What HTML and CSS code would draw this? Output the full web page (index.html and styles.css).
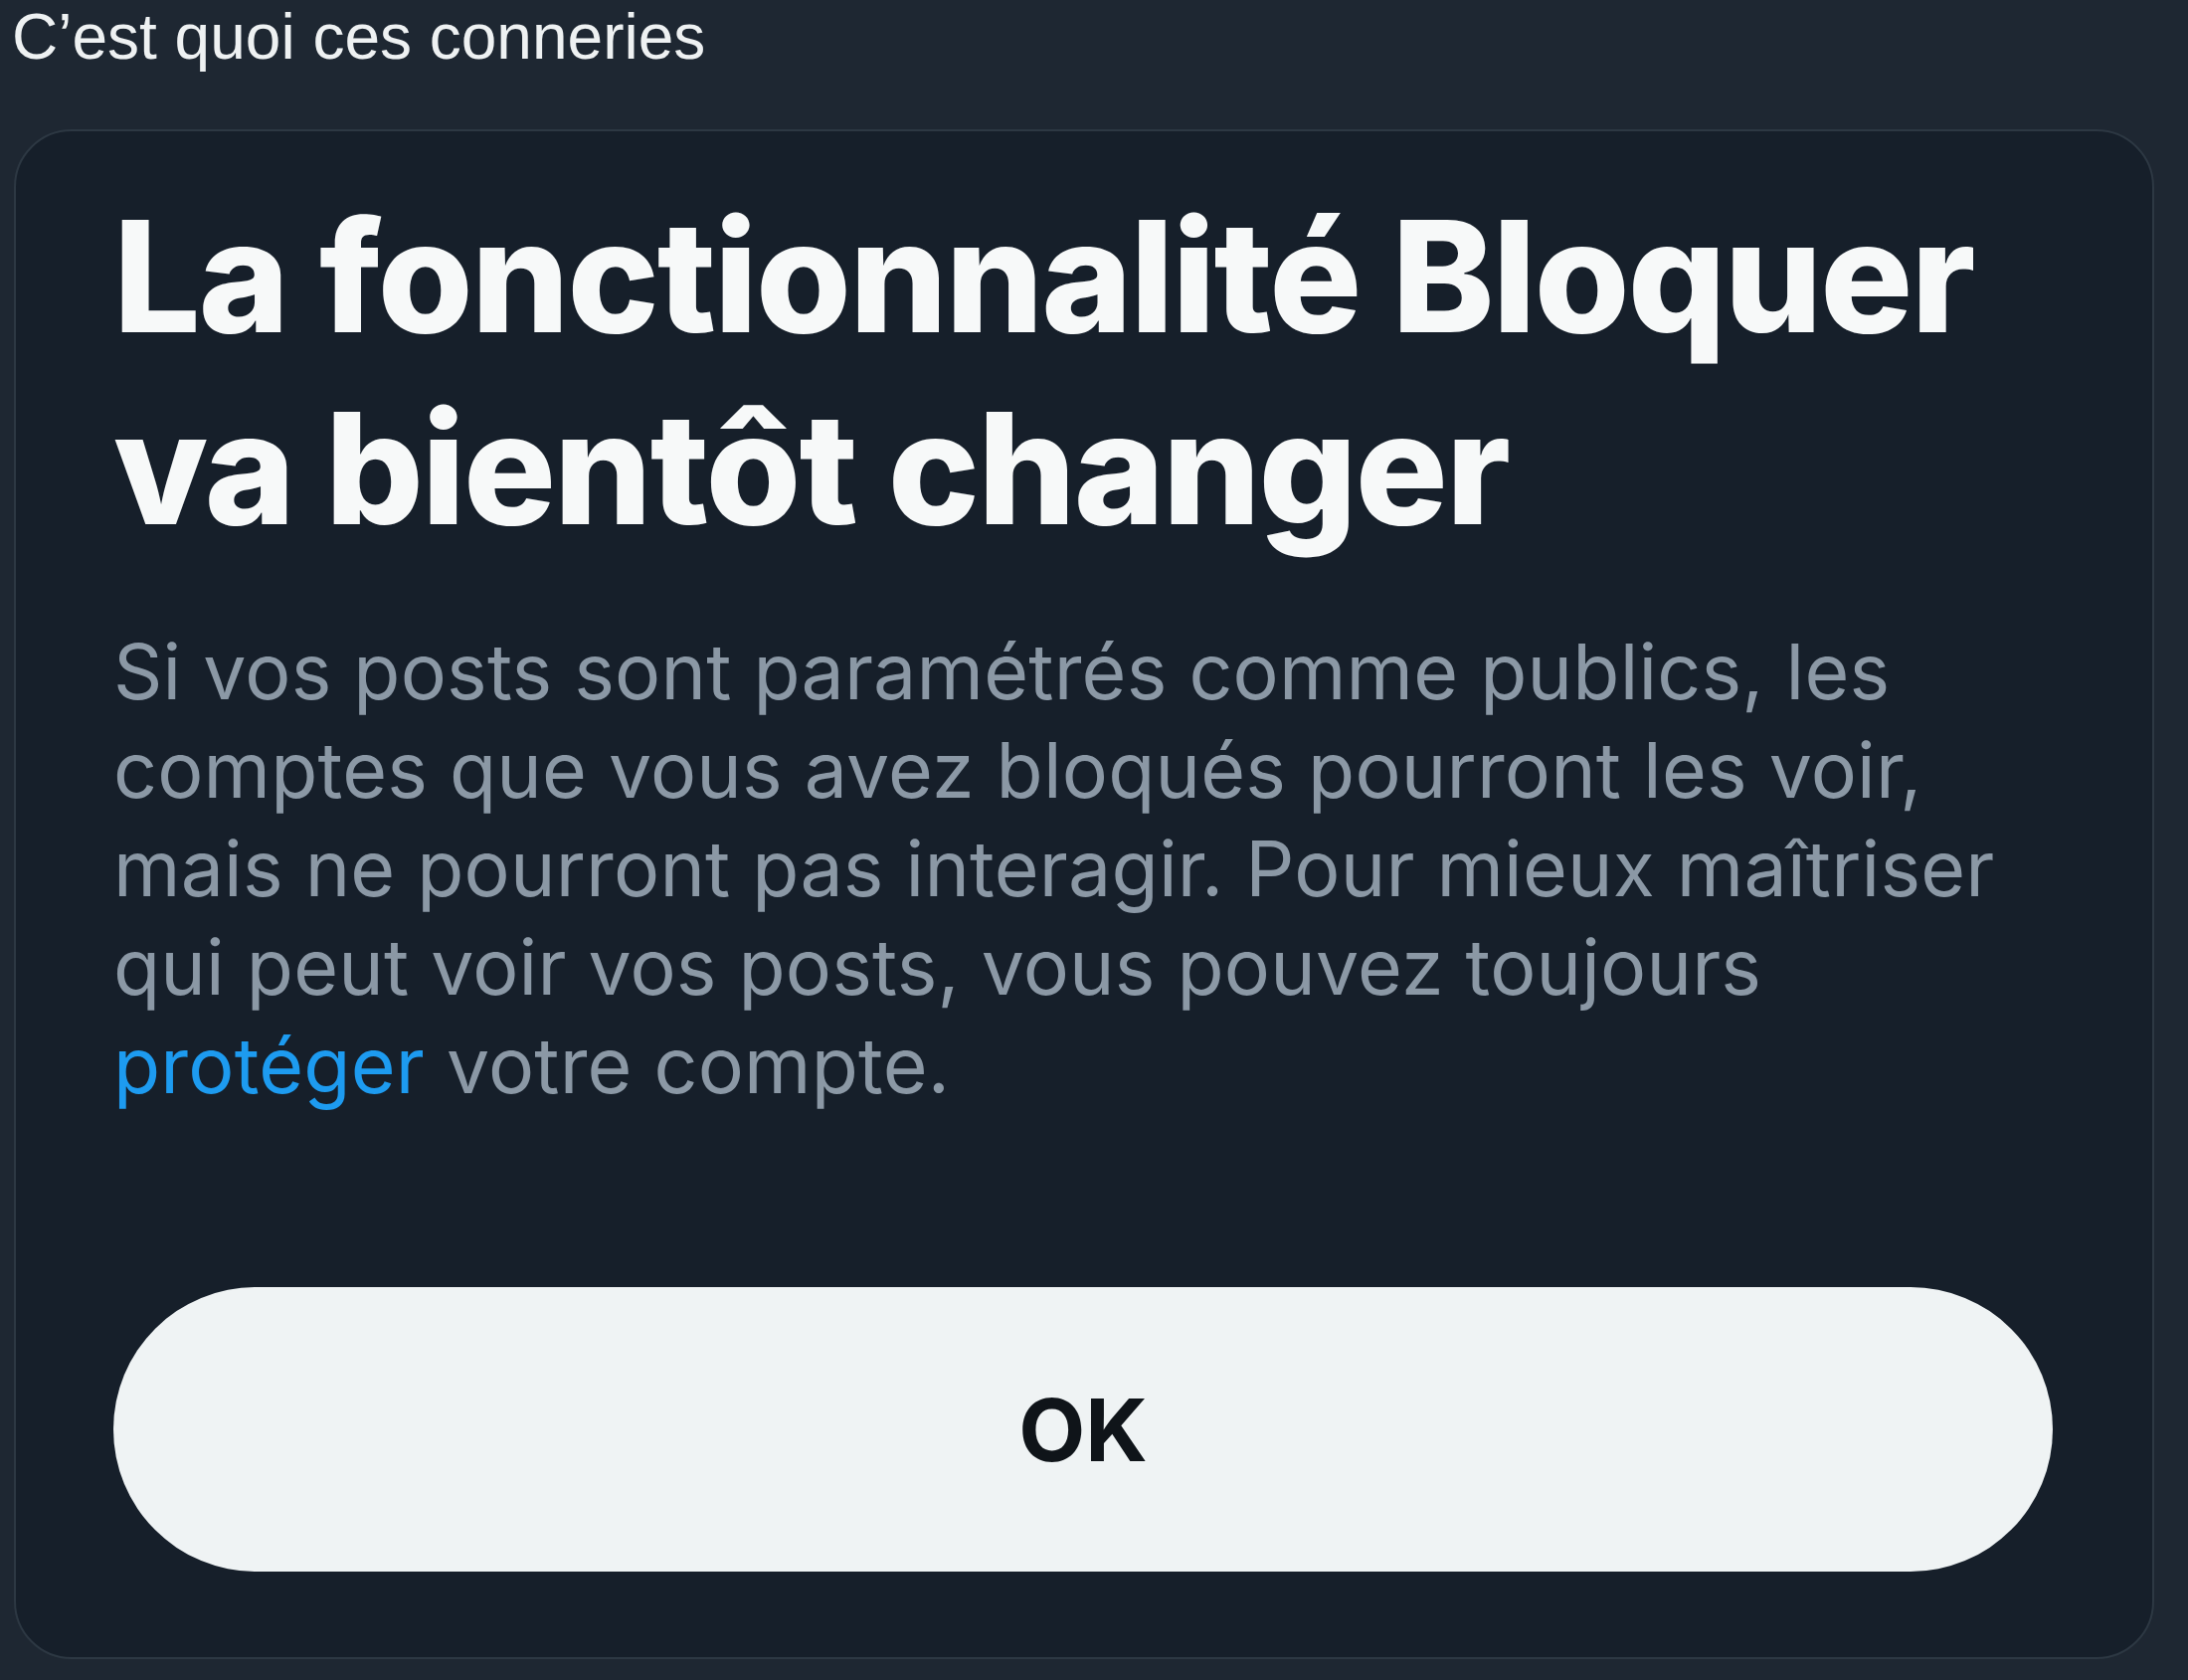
FILE: index.html
```html
<!DOCTYPE html>
<html lang="fr">
<head>
<meta charset="utf-8">
<title>La fonctionnalité Bloquer va bientôt changer</title>
<link rel="stylesheet" href="styles.css">
</head>
<body>
  <p class="caption">C’est quoi ces conneries</p>
  <div class="card">
    <h1 class="title">La fonctionnalité Bloquer va bientôt changer</h1>
    <p class="desc">Si vos posts sont paramétrés comme publics, les comptes que vous avez bloqués pourront les voir, mais ne pourront pas interagir. Pour mieux maîtriser qui peut voir vos posts, vous pouvez toujours <a class="link" href="#">protéger</a> votre compte.</p>
    <button class="ok-btn" type="button">OK</button>
  </div>
</body>
</html>
```
FILE: styles.css
```css
html, body {
  margin: 0;
  padding: 0;
}
body {
  background: #1e2732;
  width: 2200px;
  height: 1689px;
  overflow: hidden;
}
.caption {
  margin: 0;
  padding: 1px 0 0 12px;
  font-family: "Liberation Sans", Arial, sans-serif;
  font-size: 64px;
  line-height: 72px;
  color: #eef1f2;
}
.card {
  margin: 57px 34px 0 14px;
  border: 2px solid #2d3843;
  border-radius: 58px;
  background: #161f2a;
  padding: 49px 100px 86px 98px;
  display: flex;
  flex-direction: column;
}
.title {
  margin: 0;
  font-family: Inter, "Liberation Sans", sans-serif;
  font-weight: 800;
  font-size: 155px;
  line-height: 193px;
  letter-spacing: -1.9px;
  color: #f7f9f9;
}
.desc {
  margin: 59px 0 0 0;
  font-family: Inter, "Liberation Sans", sans-serif;
  font-weight: 400;
  font-size: 77px;
  line-height: 99px;
  letter-spacing: 0.2px;
  color: #8b98a5;
}
.link {
  color: #1d9bf0;
  text-decoration: none;
}
.ok-btn {
  margin-top: 173px;
  height: 286px;
  border: none;
  border-radius: 143px;
  background: #eff3f4;
  color: #0f1419;
  font-family: Inter, "Liberation Sans", sans-serif;
  font-weight: 700;
  font-size: 87px;
  padding: 0;
  cursor: pointer;
}
```
